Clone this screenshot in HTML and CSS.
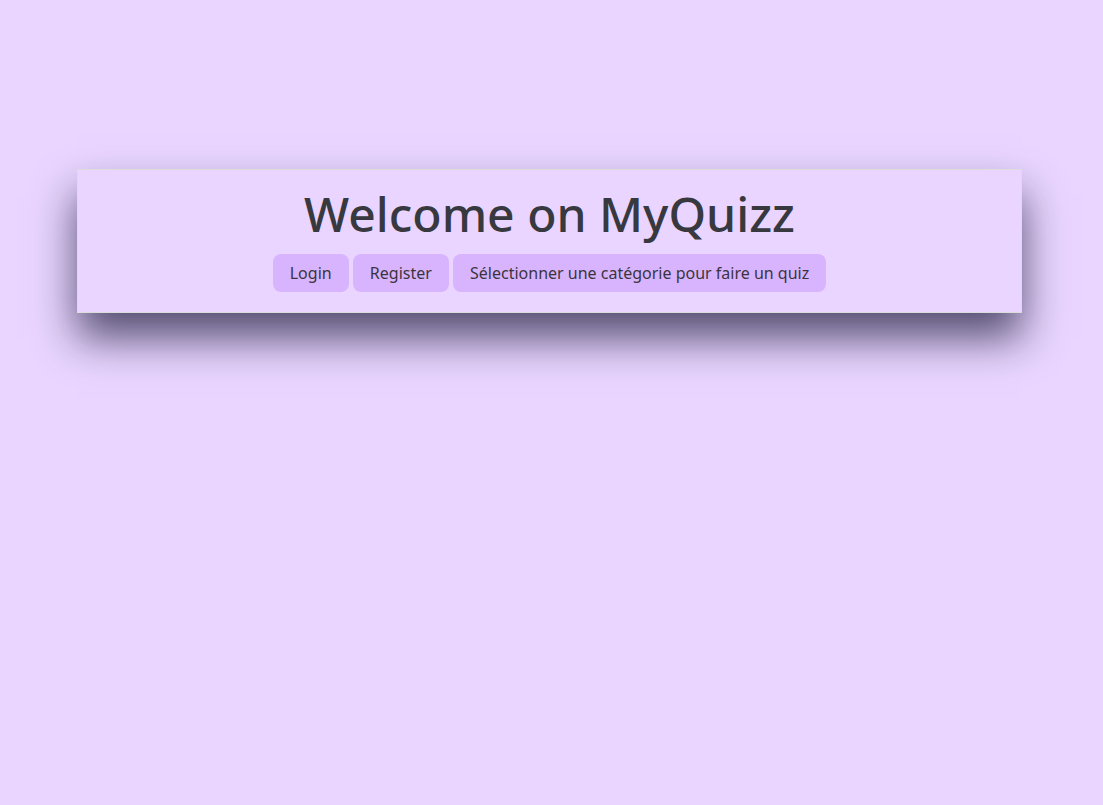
FILE: index.html
```html
<!DOCTYPE html>
<html lang="fr">
<head>
<meta charset="utf-8">
<title>MyQuizz</title>
<link rel="stylesheet" href="styles.css">
</head>
<body>
<header class="hero">
  <h1 class="hero-title">Welcome on MyQuizz</h1>
  <nav class="hero-nav">
    <a class="btn" href="#">Login</a>
    <a class="btn" href="#">Register</a>
    <a class="btn" href="#">Sélectionner une catégorie pour faire un quiz</a>
  </nav>
</header>
</body>
</html>
```
FILE: styles.css
```css
html, body {
  margin: 0;
  padding: 0;
}
html {
  background: #e9d5ff;
}
body {
  box-sizing: border-box;
  min-height: 805px;
  font-family: "Noto Sans", "Open Sans", sans-serif;
  color: #343a40;
  padding-top: 169px;
}
.hero {
  box-sizing: border-box;
  width: 945px;
  margin-left: 77px;
  background: #e9d5ff;
  border: 1px solid #dcdcdc;
  box-shadow: 0 25px 40px rgba(15, 15, 45, 0.68);
  padding: 15px 0 20px;
  text-align: center;
}
.hero-title {
  margin: 0 0 11px;
  font-size: 48px;
  font-weight: 500;
  line-height: 58px;
  color: #38383f;
}
.hero-nav {
  display: block;
  font-size: 16px;
  line-height: 26px;
  text-align: center;
}
.btn {
  display: inline-block;
  vertical-align: top;
  padding: 6px 17px;
  font-size: 16px;
  line-height: 26px;
  color: #3a3440;
  background: #d8b4fe;
  border-radius: 8px;
  text-decoration: none;
}
```
